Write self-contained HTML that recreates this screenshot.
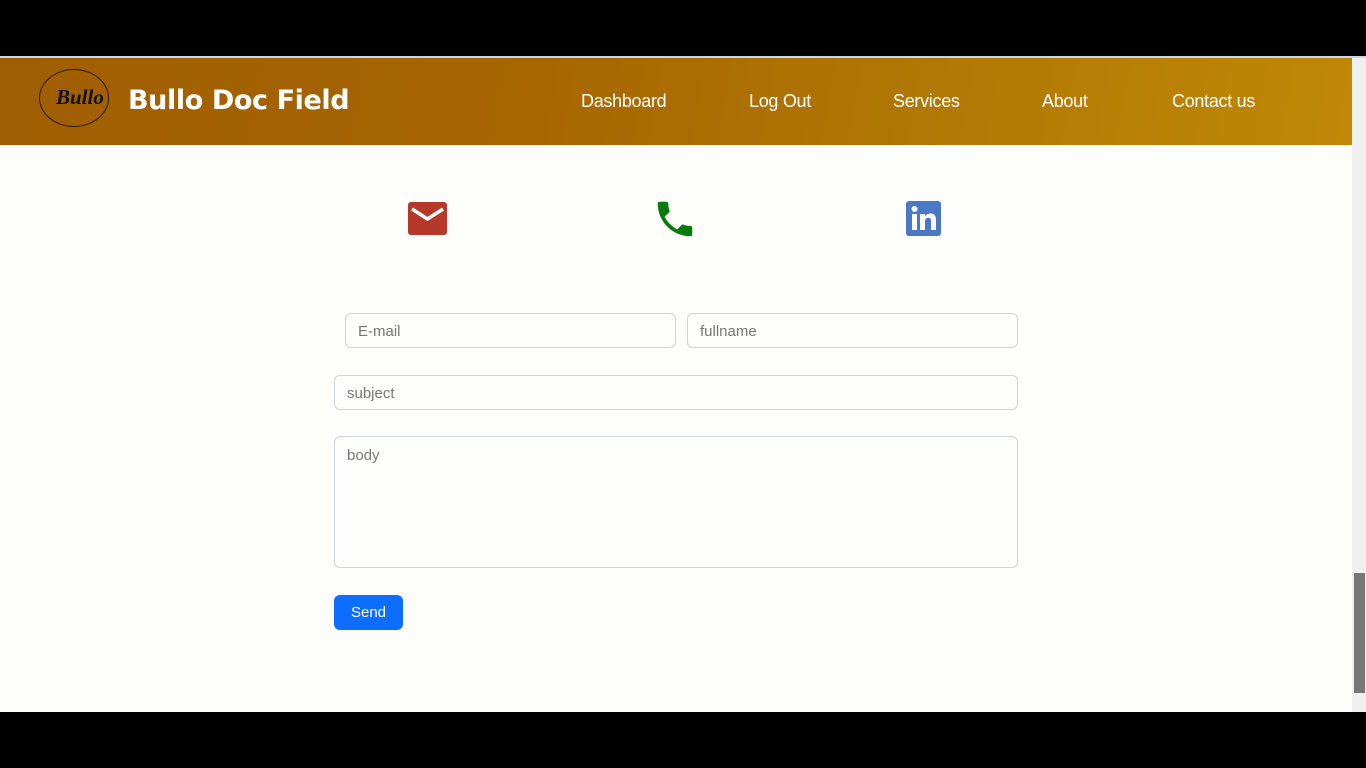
<!DOCTYPE html>
<html><head><meta charset="utf-8"><style>
*{margin:0;padding:0;box-sizing:border-box}
body{width:1366px;height:768px;background:#000;position:relative;overflow:hidden;font-family:"Liberation Sans",sans-serif}
.line{position:absolute;top:56px;left:0;width:1366px;height:2px;background:#c9d6e6}
.page{position:absolute;top:58px;left:0;width:1352px;height:654px;background:#fdfdfc}
.sb{position:absolute;top:58px;left:1352px;width:14px;height:654px;background:#f0f0f0}
.thumb{position:absolute;top:515px;left:2px;width:11px;height:120px;background:#777}
.hdr{position:absolute;top:0;left:0;width:1352px;height:87px;background:linear-gradient(100deg,#a05e02 0%,#a76602 40%,#b27905 70%,#c08805 100%)}
.logo{position:absolute;left:39px;top:11px;width:70px;height:58px;border:1px solid #2a1a05;border-radius:50%}
.logo span{position:absolute;left:16px;top:15px;font:italic bold 21px "Liberation Serif",serif;color:#111}
.brand{position:absolute;left:128px;top:27px;font:900 27px "DejaVu Sans",sans-serif;color:#fff;letter-spacing:-0.4px}
.nav a{position:absolute;top:33px;color:#fff;font-size:18px;text-decoration:none;letter-spacing:-0.3px}
.inp{position:absolute;border:1px solid #ced4da;border-radius:6px;background:#fdfdfc;font:15px "Liberation Sans",sans-serif;color:#777;padding-left:12px;line-height:35px;height:35px}
.btn{position:absolute;left:334px;top:537px;width:69px;height:35px;background:#0d6efd;color:#fff;border-radius:6px;font:15px "Liberation Sans",sans-serif;text-align:center;line-height:36px}
</style></head><body>
<div class="line"></div>
<div class="page">
<div class="hdr">
<div class="logo"><span>Bullo</span></div>
<div class="brand">Bullo Doc Field</div>
<div class="nav">
<a style="left:581px">Dashboard</a><a style="left:749px">Log Out</a><a style="left:893px">Services</a><a style="left:1042px">About</a><a style="left:1172px">Contact us</a>
</div></div>
<svg style="position:absolute;left:408px;top:144px" width="39" height="33" viewBox="0 0 39 33"><rect x="0" y="0" width="39" height="33" rx="3" fill="#b5382a"/><path d="M4 7 L19.5 17 L35 7" stroke="#fff" stroke-width="3.5" fill="none"/></svg>
<svg style="position:absolute;left:652px;top:138px" width="46" height="46" viewBox="0 0 24 24"><path fill="#0a7a0a" d="M6.6 10.8c1.4 2.8 3.8 5.1 6.6 6.6l2.2-2.2c.3-.3.7-.4 1-.2 1.1.4 2.3.6 3.6.6.6 0 1 .4 1 1V20c0 .6-.4 1-1 1C10.6 21 3 13.4 3 4c0-.6.4-1 1-1h3.5c.6 0 1 .4 1 1 0 1.3.2 2.5.6 3.6.1.3 0 .7-.2 1z"/></svg>
<svg style="position:absolute;left:906px;top:143px" width="35" height="35" viewBox="0 0 35 35"><rect width="35" height="35" rx="3" fill="#4a78c5"/><rect x="6" y="13" width="5" height="16" fill="#fff"/><circle cx="8.5" cy="8" r="3" fill="#fff"/><path d="M14 13h5v2.5c1-1.8 3-3 5.5-3 4 0 5.5 2.5 5.5 6.5V29h-5v-9c0-2-.6-3.3-2.5-3.3S19 18 19 20v9h-5z" fill="#fff"/></svg>
<div class="inp" style="left:345px;top:255px;width:331px">E-mail</div>
<div class="inp" style="left:687px;top:255px;width:331px">fullname</div>
<div class="inp" style="left:334px;top:317px;width:684px">subject</div>
<div class="inp" style="left:334px;top:378px;width:684px;height:132px;line-height:1;padding-top:11px">body</div>
<div class="btn">Send</div>
</div>
<div class="sb"><div class="thumb"></div></div>
</body></html>
